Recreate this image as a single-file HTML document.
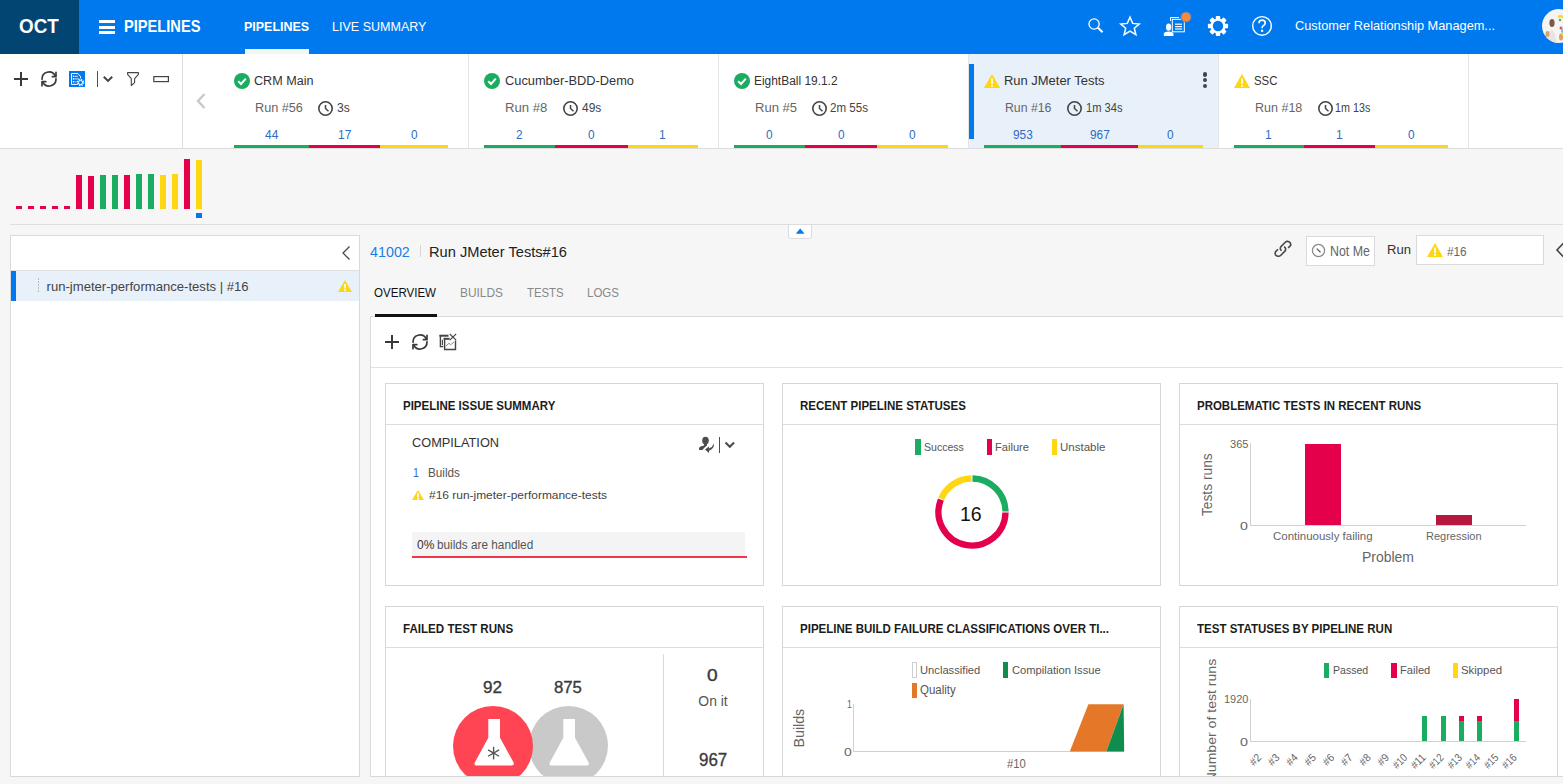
<!DOCTYPE html>
<html><head><meta charset="utf-8"><style>
html,body{margin:0;padding:0;}
body{width:1563px;height:784px;overflow:hidden;position:relative;background:#f6f6f6;font-family:"Liberation Sans",sans-serif;}
.t{position:absolute;white-space:nowrap;}
svg{overflow:visible;}
</style></head><body>
<div style="position:absolute;left:0px;top:0px;width:1563px;height:54px;background:#0079ef"></div>
<div style="position:absolute;left:0px;top:0px;width:79px;height:54px;background:#024573"></div>
<div class="t" style="left:19.25px;top:14.80px;font-size:19.86px;line-height:22px;color:#fff;font-weight:bold;transform:scaleX(0.9484);transform-origin:0 0;">OCT</div>
<div style="position:absolute;left:99px;top:20px;width:16px;height:2.5px;background:#fff"></div>
<div style="position:absolute;left:99px;top:26px;width:16px;height:2.5px;background:#fff"></div>
<div style="position:absolute;left:99px;top:31px;width:16px;height:2.5px;background:#fff"></div>
<div class="t" style="left:124.05px;top:17.04px;font-size:16.20px;line-height:18px;color:#fff;font-weight:bold;transform:scaleX(0.9044);transform-origin:0 0;">PIPELINES</div>
<div class="t" style="left:244.19px;top:18.87px;font-size:12.96px;line-height:15px;color:#fff;font-weight:bold;transform:scaleX(0.9617);transform-origin:0 0;">PIPELINES</div>
<div style="position:absolute;left:245px;top:49px;width:64px;height:5px;background:#f5f5f5"></div>
<div class="t" style="left:332.40px;top:18.87px;font-size:12.96px;line-height:15px;color:#fff;transform:scaleX(0.9674);transform-origin:0 0;">LIVE SUMMARY</div>
<div class="t" style="left:1295.36px;top:18.90px;font-size:12.69px;line-height:14px;color:#fff;transform:scaleX(1.0057);transform-origin:0 0;">Customer Relationship Managem...</div>
<svg style="position:absolute;left:1080px;top:10px;" width="30" height="30" viewBox="0 0 30 30"><circle cx="14.1" cy="14" r="5.1" fill="none" stroke="#fff" stroke-width="1.3"/><line x1="18" y1="17.8" x2="22.6" y2="22.2" stroke="#fff" stroke-width="2.1" stroke-linecap="butt"/></svg>
<svg style="position:absolute;left:1119px;top:16px;" width="22" height="20" viewBox="0 0 22 20"><polygon points="11,1.2 13.7,7.4 20.3,8 15.3,12.3 16.9,18.7 11,15.2 5.1,18.7 6.7,12.3 1.7,8 8.3,7.4" fill="none" stroke="#fff" stroke-width="1.5" stroke-linejoin="miter"/></svg>
<svg style="position:absolute;left:1160px;top:8px;" width="34" height="32" viewBox="0 0 34 32"><g fill="none" stroke="#fff" stroke-width="1"><path d="M10.5,13 V9.5 H19"/><rect x="12.3" y="11.3" width="12" height="12.5"/></g><g stroke="#fff" stroke-width="1.2"><line x1="15" y1="16.2" x2="22" y2="16.2"/><line x1="15" y1="18.6" x2="22" y2="18.6"/><line x1="15" y1="21" x2="22" y2="21"/></g><ellipse cx="8.6" cy="19.2" rx="2.6" ry="3.6" fill="#fff"/><path d="M3.8,28 V25.6 Q4.5,23.4 8.6,23.4 Q12.7,23.4 13.4,25.6 V28 Z" fill="#fff"/><circle cx="26" cy="9" r="5.6" fill="#4f7fe0"/><circle cx="26" cy="9" r="4.6" fill="#f28c38"/></svg>
<svg style="position:absolute;left:1206px;top:14px;" width="24" height="24" viewBox="0 0 24 24"><g transform="translate(12,12)"><rect x="-2.2" y="-10.1" width="4.4" height="4" rx="0.8" fill="#fff" transform="rotate(0)"/><rect x="-2.2" y="-10.1" width="4.4" height="4" rx="0.8" fill="#fff" transform="rotate(45)"/><rect x="-2.2" y="-10.1" width="4.4" height="4" rx="0.8" fill="#fff" transform="rotate(90)"/><rect x="-2.2" y="-10.1" width="4.4" height="4" rx="0.8" fill="#fff" transform="rotate(135)"/><rect x="-2.2" y="-10.1" width="4.4" height="4" rx="0.8" fill="#fff" transform="rotate(180)"/><rect x="-2.2" y="-10.1" width="4.4" height="4" rx="0.8" fill="#fff" transform="rotate(225)"/><rect x="-2.2" y="-10.1" width="4.4" height="4" rx="0.8" fill="#fff" transform="rotate(270)"/><rect x="-2.2" y="-10.1" width="4.4" height="4" rx="0.8" fill="#fff" transform="rotate(315)"/><circle r="7.6" fill="#fff"/><circle r="5.2" fill="#0079ef"/></g></svg>
<svg style="position:absolute;left:1250px;top:14px;" width="24" height="24" viewBox="0 0 24 24"><circle cx="12" cy="11.9" r="9.3" fill="none" stroke="#fff" stroke-width="1.4"/><path d="M9,9.3 Q9,6.2 12.1,6.2 Q15.2,6.2 15.2,9 Q15.2,10.8 13.2,11.8 Q12.1,12.4 12.1,14.2" fill="none" stroke="#fff" stroke-width="1.7"/><rect x="11" y="15.8" width="2.2" height="2" fill="#fff"/></svg>
<svg style="position:absolute;left:1542px;top:9px;" width="34" height="34" viewBox="0 0 34 34"><defs><clipPath id="av"><circle cx="17" cy="17" r="17"/></clipPath></defs><g clip-path="url(#av)"><rect width="34" height="34" fill="#f6f4f2"/><ellipse cx="10" cy="14" rx="2.6" ry="4" fill="#7a5a48"/><path d="M3,34 L5,24 Q8,20 12,22 L15,34 Z" fill="#e9e4df"/><ellipse cx="5.5" cy="25" rx="2" ry="3" fill="#d9a070"/><ellipse cx="19" cy="28" rx="2" ry="3.5" fill="#e0a060"/><path d="M16,8 Q22,5 25,14 Q23,22 20,26" fill="none" stroke="#f2d640" stroke-width="2.5"/><circle cx="21" cy="22" r="2" fill="#6ec0ea"/><circle cx="19" cy="19" r="1.5" fill="#e05070"/><circle cx="18" cy="11" r="1.3" fill="#5cb85c"/></g></svg>
<div style="position:absolute;left:0px;top:54px;width:1563px;height:94px;background:#fff"></div>
<div style="position:absolute;left:0px;top:148px;width:1563px;height:1px;background:#dcdcdc"></div>
<div style="position:absolute;left:182px;top:54px;width:1px;height:94px;background:#dcdcdc"></div>
<div style="position:absolute;left:468px;top:54px;width:1px;height:94px;background:#e4e4e4"></div>
<div style="position:absolute;left:718px;top:54px;width:1px;height:94px;background:#e4e4e4"></div>
<div style="position:absolute;left:968px;top:54px;width:1px;height:94px;background:#e4e4e4"></div>
<div style="position:absolute;left:1218px;top:54px;width:1px;height:94px;background:#e4e4e4"></div>
<div style="position:absolute;left:1468px;top:54px;width:1px;height:94px;background:#e4e4e4"></div>
<svg style="position:absolute;left:13px;top:71px;" width="16" height="16" viewBox="0 0 16 16"><line x1="1" y1="8" x2="15" y2="8" stroke="#3a3a3a" stroke-width="2"/><line x1="8" y1="1" x2="8" y2="15" stroke="#3a3a3a" stroke-width="2"/></svg>
<svg style="position:absolute;left:39px;top:69px;" width="20" height="20" viewBox="0 0 20 20"><g fill="none" stroke="#3a3a3a" stroke-width="1.7" stroke-linecap="round" stroke-linejoin="round"><path d="M3,10.2 A7,7 0 0 1 16.06,6.5"/><polyline points="17,3.3 17,7.7 13.4,7.7"/><path d="M17,9.8 A7,7 0 0 1 3.9400000000000004,13.5"/><polyline points="3,16.7 3,12.65 6.8,12.65"/></g></svg>
<svg style="position:absolute;left:69px;top:71px;" width="16" height="16" viewBox="0 0 16 16"><rect x="0" y="0" width="16" height="16" fill="#0079ef"/><g fill="none" stroke="#fff" stroke-width="1"><path d="M2.5,13.4 V2.5 H8.8 L11.5,5.4 V7.4"/><line x1="2.5" y1="13.4" x2="7.9" y2="13.4"/><line x1="5.4" y1="5.3" x2="9" y2="5.3" stroke-opacity="0.8"/><line x1="5.4" y1="7.9" x2="10" y2="7.9" stroke-opacity="0.8"/><line x1="5.4" y1="10.8" x2="7.5" y2="10.8" stroke-opacity="0.6"/></g><circle cx="4.5" cy="5.2" r="0.8" fill="#fff"/><circle cx="4.5" cy="7.9" r="0.8" fill="#fff"/><circle cx="4.5" cy="10.8" r="0.8" fill="#fff"/><circle cx="11.5" cy="11.5" r="3.8" fill="#0079ef"/><circle cx="11.5" cy="11.5" r="2.9" fill="none" stroke="#fff" stroke-width="1.8" stroke-dasharray="1.15 1.13"/><circle cx="11.5" cy="11.5" r="2.1" fill="none" stroke="#fff" stroke-width="1"/></svg>
<div style="position:absolute;left:97px;top:71px;width:1.2px;height:16px;background:#505050"></div>
<svg style="position:absolute;left:102px;top:74px;" width="12" height="9" viewBox="0 0 12 9"><polyline points="1.8,2.8 6,6.9 10.2,2.8" fill="none" stroke="#444" stroke-width="2"/></svg>
<svg style="position:absolute;left:126px;top:71px;" width="14" height="16" viewBox="0 0 14 16"><path d="M1.6,1.6 H12.4 V3.4 L8.6,7.7 V11.6 L5.3,14.5 V7.7 L1.6,3.4 Z" fill="none" stroke="#444" stroke-width="1.1" stroke-linejoin="round"/></svg>
<svg style="position:absolute;left:153px;top:75px;" width="17" height="8" viewBox="0 0 17 8"><rect x="0.8" y="1.6" width="14.6" height="5" fill="none" stroke="#444" stroke-width="1.2"/></svg>
<svg style="position:absolute;left:195px;top:92px;" width="12" height="18" viewBox="0 0 12 18"><polyline points="9.5,2 3,9 9.5,16" fill="none" stroke="#c8c8c8" stroke-width="2.4"/></svg>
<div style="position:absolute;left:969px;top:54px;width:249px;height:94px;background:#e8f0fa"></div>
<div style="position:absolute;left:969px;top:64px;width:5px;height:75px;background:#0079ef"></div>
<svg style="position:absolute;left:234px;top:73px;" width="16" height="16" viewBox="0 0 16 16"><circle cx="8" cy="8" r="8" fill="#1aac60"/><polyline points="4.2,8.3 7,11 11.8,5.6" fill="none" stroke="#fff" stroke-width="2"/></svg>
<div class="t" style="left:254.37px;top:74.00px;font-size:12.00px;line-height:14px;color:#333;transform:scaleX(1.0496);transform-origin:0 0;">CRM Main</div>
<div class="t" style="left:255.39px;top:99.67px;font-size:12.96px;line-height:15px;color:#666;transform:scaleX(0.9784);transform-origin:0 0;">Run #56</div>
<svg style="position:absolute;left:318px;top:100.5px;" width="15" height="15" viewBox="0 0 15 15"><circle cx="7.5" cy="7.5" r="6.7" fill="none" stroke="#444" stroke-width="1.6"/><polyline points="7.5,3.9000000000000004 7.5,7.5 10.5,10.200000000000001" fill="none" stroke="#444" stroke-width="1.5"/></svg>
<div class="t" style="left:337.31px;top:99.67px;font-size:12.96px;line-height:15px;color:#444;transform:scaleX(0.9371);transform-origin:0 0;">3s</div>
<div style="position:absolute;left:234px;top:145px;width:75px;height:3px;background:#1aac60"></div>
<div class="t" style="left:264.90px;top:127.00px;font-size:13.04px;line-height:15px;color:#2d6bc4;transform:scaleX(0.9200);transform-origin:0 0;">44</div>
<div style="position:absolute;left:309px;top:145px;width:71px;height:3px;background:#e5004c"></div>
<div class="t" style="left:337.69px;top:127.00px;font-size:13.04px;line-height:15px;color:#2d6bc4;transform:scaleX(0.9200);transform-origin:0 0;">17</div>
<div style="position:absolute;left:380px;top:145px;width:68px;height:3px;background:#fed612"></div>
<div class="t" style="left:410.69px;top:127.87px;font-size:12.68px;line-height:14px;color:#2d6bc4;transform:scaleX(0.9331);transform-origin:0 0;">0</div>
<svg style="position:absolute;left:484px;top:73px;" width="16" height="16" viewBox="0 0 16 16"><circle cx="8" cy="8" r="8" fill="#1aac60"/><polyline points="4.2,8.3 7,11 11.8,5.6" fill="none" stroke="#fff" stroke-width="2"/></svg>
<div class="t" style="left:504.56px;top:74.00px;font-size:12.00px;line-height:14px;color:#333;transform:scaleX(1.0687);transform-origin:0 0;">Cucumber-BDD-Demo</div>
<div class="t" style="left:505.25px;top:99.67px;font-size:12.96px;line-height:15px;color:#666;transform:scaleX(1.0141);transform-origin:0 0;">Run #8</div>
<svg style="position:absolute;left:562.6px;top:100.5px;" width="15" height="15" viewBox="0 0 15 15"><circle cx="7.5" cy="7.5" r="6.7" fill="none" stroke="#444" stroke-width="1.6"/><polyline points="7.5,3.9000000000000004 7.5,7.5 10.5,10.200000000000001" fill="none" stroke="#444" stroke-width="1.5"/></svg>
<div class="t" style="left:581.76px;top:99.67px;font-size:12.96px;line-height:15px;color:#444;transform:scaleX(0.9231);transform-origin:0 0;">49s</div>
<div style="position:absolute;left:484px;top:145px;width:71px;height:3px;background:#1aac60"></div>
<div class="t" style="left:516.22px;top:127.00px;font-size:12.86px;line-height:15px;color:#2d6bc4;transform:scaleX(0.9200);transform-origin:0 0;">2</div>
<div style="position:absolute;left:555px;top:145px;width:73px;height:3px;background:#e5004c"></div>
<div class="t" style="left:588.19px;top:127.87px;font-size:12.68px;line-height:14px;color:#2d6bc4;transform:scaleX(0.9331);transform-origin:0 0;">0</div>
<div style="position:absolute;left:628px;top:145px;width:70px;height:3px;background:#fed612"></div>
<div class="t" style="left:659.49px;top:127.00px;font-size:13.04px;line-height:15px;color:#2d6bc4;transform:scaleX(0.9200);transform-origin:0 0;">1</div>
<svg style="position:absolute;left:734px;top:73px;" width="16" height="16" viewBox="0 0 16 16"><circle cx="8" cy="8" r="8" fill="#1aac60"/><polyline points="4.2,8.3 7,11 11.8,5.6" fill="none" stroke="#fff" stroke-width="2"/></svg>
<div class="t" style="left:754.05px;top:74.00px;font-size:12.00px;line-height:14px;color:#333;transform:scaleX(0.9939);transform-origin:0 0;">EightBall 19.1.2</div>
<div class="t" style="left:754.95px;top:99.67px;font-size:13.14px;line-height:15px;color:#666;transform:scaleX(0.9949);transform-origin:0 0;">Run #5</div>
<svg style="position:absolute;left:812.4px;top:100.5px;" width="15" height="15" viewBox="0 0 15 15"><circle cx="7.5" cy="7.5" r="6.7" fill="none" stroke="#444" stroke-width="1.6"/><polyline points="7.5,3.9000000000000004 7.5,7.5 10.5,10.200000000000001" fill="none" stroke="#444" stroke-width="1.5"/></svg>
<div class="t" style="left:830.42px;top:99.67px;font-size:12.96px;line-height:15px;color:#444;transform:scaleX(0.8937);transform-origin:0 0;">2m 55s</div>
<div style="position:absolute;left:734px;top:145px;width:71px;height:3px;background:#1aac60"></div>
<div class="t" style="left:766.19px;top:127.87px;font-size:12.68px;line-height:14px;color:#2d6bc4;transform:scaleX(0.9331);transform-origin:0 0;">0</div>
<div style="position:absolute;left:805px;top:145px;width:72px;height:3px;background:#e5004c"></div>
<div class="t" style="left:837.69px;top:127.87px;font-size:12.68px;line-height:14px;color:#2d6bc4;transform:scaleX(0.9331);transform-origin:0 0;">0</div>
<div style="position:absolute;left:877px;top:145px;width:71px;height:3px;background:#fed612"></div>
<div class="t" style="left:909.19px;top:127.87px;font-size:12.68px;line-height:14px;color:#2d6bc4;transform:scaleX(0.9331);transform-origin:0 0;">0</div>
<svg style="position:absolute;left:984px;top:74px;" width="16" height="14" viewBox="0 0 16 14"><polygon points="8.0,0 16,14 0,14" fill="#fed612"/><rect x="7.1" y="4.62" width="1.8" height="5.32" fill="#fff"/><rect x="7.1" y="10.92" width="1.8" height="1.8" fill="#fff"/></svg>
<div class="t" style="left:1003.96px;top:74.00px;font-size:12.61px;line-height:14px;color:#333;transform:scaleX(1.0270);transform-origin:0 0;">Run JMeter Tests</div>
<div class="t" style="left:1005.32px;top:99.67px;font-size:12.96px;line-height:15px;color:#666;transform:scaleX(0.9468);transform-origin:0 0;">Run #16</div>
<svg style="position:absolute;left:1067.4px;top:100.5px;" width="15" height="15" viewBox="0 0 15 15"><circle cx="7.5" cy="7.5" r="6.7" fill="none" stroke="#444" stroke-width="1.6"/><polyline points="7.5,3.9000000000000004 7.5,7.5 10.5,10.200000000000001" fill="none" stroke="#444" stroke-width="1.5"/></svg>
<div class="t" style="left:1086.16px;top:99.67px;font-size:12.96px;line-height:15px;color:#444;transform:scaleX(0.8618);transform-origin:0 0;">1m 34s</div>
<div style="position:absolute;left:984px;top:145px;width:77px;height:3px;background:#1aac60"></div>
<div class="t" style="left:1012.62px;top:127.87px;font-size:12.68px;line-height:14px;color:#2d6bc4;transform:scaleX(0.9331);transform-origin:0 0;">953</div>
<div style="position:absolute;left:1061px;top:145px;width:77px;height:3px;background:#e5004c"></div>
<div class="t" style="left:1089.68px;top:127.87px;font-size:12.68px;line-height:14px;color:#2d6bc4;transform:scaleX(0.9331);transform-origin:0 0;">967</div>
<div style="position:absolute;left:1138px;top:145px;width:65px;height:3px;background:#fed612"></div>
<div class="t" style="left:1167.19px;top:127.87px;font-size:12.68px;line-height:14px;color:#2d6bc4;transform:scaleX(0.9331);transform-origin:0 0;">0</div>
<svg style="position:absolute;left:1234px;top:74px;" width="16" height="14" viewBox="0 0 16 14"><polygon points="8.0,0 16,14 0,14" fill="#fed612"/><rect x="7.1" y="4.62" width="1.8" height="5.32" fill="#fff"/><rect x="7.1" y="10.92" width="1.8" height="1.8" fill="#fff"/></svg>
<div class="t" style="left:1254.49px;top:74.00px;font-size:12.43px;line-height:14px;color:#333;transform:scaleX(0.9166);transform-origin:0 0;">SSC</div>
<div class="t" style="left:1255.00px;top:99.67px;font-size:12.96px;line-height:15px;color:#666;transform:scaleX(0.9657);transform-origin:0 0;">Run #18</div>
<svg style="position:absolute;left:1317.5px;top:100.5px;" width="15" height="15" viewBox="0 0 15 15"><circle cx="7.5" cy="7.5" r="6.7" fill="none" stroke="#444" stroke-width="1.6"/><polyline points="7.5,3.9000000000000004 7.5,7.5 10.5,10.200000000000001" fill="none" stroke="#444" stroke-width="1.5"/></svg>
<div class="t" style="left:1335.49px;top:99.67px;font-size:12.96px;line-height:15px;color:#444;transform:scaleX(0.8302);transform-origin:0 0;">1m 13s</div>
<div style="position:absolute;left:1234px;top:145px;width:70px;height:3px;background:#1aac60"></div>
<div class="t" style="left:1265.49px;top:127.00px;font-size:13.04px;line-height:15px;color:#2d6bc4;transform:scaleX(0.9200);transform-origin:0 0;">1</div>
<div style="position:absolute;left:1304px;top:145px;width:71px;height:3px;background:#e5004c"></div>
<div class="t" style="left:1335.99px;top:127.00px;font-size:13.04px;line-height:15px;color:#2d6bc4;transform:scaleX(0.9200);transform-origin:0 0;">1</div>
<div style="position:absolute;left:1375px;top:145px;width:73px;height:3px;background:#fed612"></div>
<div class="t" style="left:1408.19px;top:127.87px;font-size:12.68px;line-height:14px;color:#2d6bc4;transform:scaleX(0.9331);transform-origin:0 0;">0</div>
<div style="position:absolute;left:1203px;top:72.4px;width:4.2px;height:4.2px;border-radius:50%;background:#444"></div>
<div style="position:absolute;left:1203px;top:78.10000000000001px;width:4.2px;height:4.2px;border-radius:50%;background:#444"></div>
<div style="position:absolute;left:1203px;top:83.80000000000001px;width:4.2px;height:4.2px;border-radius:50%;background:#444"></div>
<div style="position:absolute;left:16px;top:206px;width:6px;height:3px;background:#e5004c"></div>
<div style="position:absolute;left:28px;top:206px;width:6px;height:3px;background:#e5004c"></div>
<div style="position:absolute;left:40px;top:206px;width:6px;height:3px;background:#e5004c"></div>
<div style="position:absolute;left:52px;top:206px;width:6px;height:3px;background:#e5004c"></div>
<div style="position:absolute;left:64px;top:206px;width:6px;height:3px;background:#e5004c"></div>
<div style="position:absolute;left:76px;top:175px;width:6px;height:34px;background:#e5004c"></div>
<div style="position:absolute;left:88px;top:176px;width:6px;height:33px;background:#e5004c"></div>
<div style="position:absolute;left:100px;top:175px;width:6px;height:34px;background:#1aac60"></div>
<div style="position:absolute;left:112px;top:175px;width:6px;height:34px;background:#1aac60"></div>
<div style="position:absolute;left:124px;top:175px;width:6px;height:34px;background:#e5004c"></div>
<div style="position:absolute;left:136px;top:174px;width:6px;height:35px;background:#1aac60"></div>
<div style="position:absolute;left:148px;top:174px;width:6px;height:35px;background:#1aac60"></div>
<div style="position:absolute;left:160px;top:175px;width:6px;height:34px;background:#fed612"></div>
<div style="position:absolute;left:172px;top:174px;width:6px;height:35px;background:#fed612"></div>
<div style="position:absolute;left:184px;top:159px;width:6px;height:50px;background:#e5004c"></div>
<div style="position:absolute;left:196px;top:160px;width:6px;height:49px;background:#fed612"></div>
<div style="position:absolute;left:196px;top:213px;width:6px;height:5px;background:#0079ef"></div>
<div style="position:absolute;left:10px;top:224px;width:1553px;height:1px;background:#dedede"></div>
<div style="position:absolute;left:788px;top:224px;width:24px;height:15px;background:#fff;border:1px solid #dcdcdc;border-radius:0 0 3px 3px;box-sizing:border-box"></div>
<svg style="position:absolute;left:795px;top:228px;" width="11" height="7" viewBox="0 0 11 7"><polygon points="5.2,0.6 9.6,5.8 0.8,5.8" fill="#0079ef"/></svg>
<div style="position:absolute;left:10px;top:235px;width:350px;height:542px;background:#fff;border:1px solid #dadada;box-sizing:border-box"></div>
<div style="position:absolute;left:11px;top:270px;width:348px;height:1px;background:#e0e0e0"></div>
<svg style="position:absolute;left:340px;top:245px;" width="12" height="16" viewBox="0 0 12 16"><polyline points="9.5,1.5 3,8 9.5,14.5" fill="none" stroke="#444" stroke-width="1.25"/></svg>
<div style="position:absolute;left:11px;top:271px;width:348px;height:30px;background:#e8f0fa"></div>
<div style="position:absolute;left:11px;top:271px;width:5px;height:30px;background:#0079ef"></div>
<div style="position:absolute;left:38px;top:278px;width:1px;height:15px;background:repeating-linear-gradient(#bbb 0 2px,transparent 2px 3px)"></div>
<div class="t" style="left:46.54px;top:278.80px;font-size:13.10px;line-height:15px;color:#444;">run-jmeter-performance-tests | #16</div>
<svg style="position:absolute;left:338px;top:280px;" width="14" height="12" viewBox="0 0 14 12"><polygon points="7.0,0 14,12 0,12" fill="#fed612"/><rect x="6.1" y="3.96" width="1.8" height="4.5600000000000005" fill="#fff"/><rect x="6.1" y="9.36" width="1.8" height="1.8" fill="#fff"/></svg>
<div class="t" style="left:370.41px;top:243.56px;font-size:14.08px;line-height:16px;color:#1a7ee8;transform:scaleX(1.0165);transform-origin:0 0;">41002</div>
<div style="position:absolute;left:419.5px;top:245px;width:1.5px;height:12px;background:#d6d6d6"></div>
<div class="t" style="left:429.03px;top:243.56px;font-size:14.08px;line-height:16px;color:#222;transform:scaleX(1.0395);transform-origin:0 0;">Run JMeter Tests#16</div>
<svg style="position:absolute;left:1272px;top:238px;" width="22" height="22" viewBox="0 0 22 22"><svg width="22" height="22" viewBox="0 0 784 784"><g fill="none" stroke="#4a4a4a" stroke-width="58" stroke-linecap="butt" stroke-linejoin="round"><path d="M575,355 L640,290 Q690,235 650,170 Q600,110 530,120 Q495,127 465,160 L320,305 Q280,350 300,405 Q315,435 345,450"/><path d="M215,400 L140,475 Q90,535 130,605 Q175,660 250,650 Q290,643 315,615 L460,470 Q500,425 480,370 Q465,330 430,315"/></g></svg></svg>
<div style="position:absolute;left:1306px;top:236px;width:69px;height:30px;background:#fff;border:1px solid #dadada;box-sizing:border-box"></div>
<svg style="position:absolute;left:1311.4px;top:243.4px;" width="15" height="15" viewBox="0 0 15 15"><circle cx="7.5" cy="7.5" r="6.1" fill="none" stroke="#8a8a8a" stroke-width="1.3"/><line x1="5.7" y1="5.6" x2="9.5" y2="9.3" stroke="#555" stroke-width="1.2"/></svg>
<div class="t" style="left:1329.51px;top:243.36px;font-size:14.00px;line-height:16px;color:#666;transform:scaleX(0.8839);transform-origin:0 0;">Not Me</div>
<div class="t" style="left:1386.55px;top:242.27px;font-size:13.43px;line-height:15px;color:#333;transform:scaleX(0.9738);transform-origin:0 0;">Run</div>
<div style="position:absolute;left:1416px;top:235px;width:128px;height:30px;background:#fff;border:1px solid #dadada;box-sizing:border-box"></div>
<svg style="position:absolute;left:1427px;top:243px;" width="16" height="14" viewBox="0 0 16 14"><polygon points="8.0,0 16,14 0,14" fill="#fed612"/><rect x="7.1" y="4.62" width="1.8" height="5.32" fill="#fff"/><rect x="7.1" y="10.92" width="1.8" height="1.8" fill="#fff"/></svg>
<div class="t" style="left:1447.24px;top:244.37px;font-size:12.82px;line-height:15px;color:#666;transform:scaleX(0.9199);transform-origin:0 0;">#16</div>
<svg style="position:absolute;left:1555px;top:241px;" width="12" height="18" viewBox="0 0 12 18"><polyline points="9,1.5 2,9 9,16.5" fill="none" stroke="#444" stroke-width="1.6"/></svg>
<div class="t" style="left:374.48px;top:285.87px;font-size:12.68px;line-height:14px;color:#111;transform:scaleX(0.9111);transform-origin:0 0;">OVERVIEW</div>
<div class="t" style="left:460.35px;top:285.87px;font-size:12.68px;line-height:14px;color:#888;transform:scaleX(0.9394);transform-origin:0 0;">BUILDS</div>
<div class="t" style="left:527.47px;top:285.87px;font-size:12.68px;line-height:14px;color:#888;transform:scaleX(0.8977);transform-origin:0 0;">TESTS</div>
<div class="t" style="left:587.28px;top:285.87px;font-size:12.68px;line-height:14px;color:#888;transform:scaleX(0.9080);transform-origin:0 0;">LOGS</div>
<div style="position:absolute;left:370px;top:316px;width:1200px;height:461px;background:#fff;border:1px solid #dadada;box-sizing:border-box"></div>
<div style="position:absolute;left:375px;top:314px;width:62px;height:3px;background:#111"></div>
<div style="position:absolute;left:371px;top:367px;width:1192px;height:1px;background:#e0e0e0"></div>
<svg style="position:absolute;left:384px;top:334px;" width="16" height="16" viewBox="0 0 16 16"><line x1="1" y1="8" x2="15" y2="8" stroke="#3a3a3a" stroke-width="2"/><line x1="8" y1="1" x2="8" y2="15" stroke="#3a3a3a" stroke-width="2"/></svg>
<svg style="position:absolute;left:409.9px;top:332px;" width="20" height="20" viewBox="0 0 20 20"><g fill="none" stroke="#3a3a3a" stroke-width="1.7" stroke-linecap="round" stroke-linejoin="round"><path d="M3,10.2 A7,7 0 0 1 16.06,6.5"/><polyline points="17,3.3 17,7.7 13.4,7.7"/><path d="M17,9.8 A7,7 0 0 1 3.9400000000000004,13.5"/><polyline points="3,16.7 3,12.65 6.8,12.65"/></g></svg>
<svg style="position:absolute;left:438px;top:332px;" width="20" height="20" viewBox="0 0 20 20"><g fill="none" stroke="#444" stroke-linecap="square"><path d="M2.4,3.7 H9.5" stroke-width="2"/><path d="M2.4,3.7 V14.6 H4.6" stroke-width="1.4"/><line x1="4.4" y1="8.2" x2="4.4" y2="12.6" stroke-width="1.1"/><path d="M6.6,6.8 H10.6" stroke-width="2"/><path d="M6.6,6.8 V17.5 H17.5 V9.3" stroke-width="1.4"/><line x1="12.2" y1="2.4" x2="17.7" y2="7.7" stroke-width="1.2"/><line x1="17.7" y1="2.4" x2="12.2" y2="7.7" stroke-width="1.2"/><polyline points="8.2,13.9 10.9,11.3 12.6,12.8 15.7,10.2" stroke="#888" stroke-width="1"/></g></svg>
<div style="position:absolute;left:385px;top:383px;width:379px;height:203px;background:#fff;border:1px solid #d6d6d6;box-sizing:border-box"></div>
<div style="position:absolute;left:386px;top:424px;width:377px;height:1px;background:#dcdcdc"></div>
<div class="t" style="left:402.65px;top:398.17px;font-size:12.96px;line-height:15px;color:#1c1c1c;font-weight:bold;transform:scaleX(0.8879);transform-origin:0 0;">PIPELINE ISSUE SUMMARY</div>
<div style="position:absolute;left:782px;top:383px;width:379px;height:203px;background:#fff;border:1px solid #d6d6d6;box-sizing:border-box"></div>
<div style="position:absolute;left:783px;top:424px;width:377px;height:1px;background:#dcdcdc"></div>
<div class="t" style="left:799.65px;top:398.17px;font-size:12.96px;line-height:15px;color:#1c1c1c;font-weight:bold;transform:scaleX(0.8888);transform-origin:0 0;">RECENT PIPELINE STATUSES</div>
<div style="position:absolute;left:1179px;top:383px;width:379px;height:203px;background:#fff;border:1px solid #d6d6d6;box-sizing:border-box"></div>
<div style="position:absolute;left:1180px;top:424px;width:377px;height:1px;background:#dcdcdc"></div>
<div class="t" style="left:1196.65px;top:398.17px;font-size:12.96px;line-height:15px;color:#1c1c1c;font-weight:bold;transform:scaleX(0.8859);transform-origin:0 0;">PROBLEMATIC TESTS IN RECENT RUNS</div>
<div style="position:absolute;left:385px;top:606px;width:379px;height:180px;background:#fff;border:1px solid #d6d6d6;box-sizing:border-box"></div>
<div style="position:absolute;left:386px;top:647px;width:377px;height:1px;background:#dcdcdc"></div>
<div class="t" style="left:402.65px;top:621.17px;font-size:12.96px;line-height:15px;color:#1c1c1c;font-weight:bold;transform:scaleX(0.8949);transform-origin:0 0;">FAILED TEST RUNS</div>
<div style="position:absolute;left:782px;top:606px;width:379px;height:180px;background:#fff;border:1px solid #d6d6d6;box-sizing:border-box"></div>
<div style="position:absolute;left:783px;top:647px;width:377px;height:1px;background:#dcdcdc"></div>
<div class="t" style="left:799.65px;top:621.17px;font-size:12.96px;line-height:15px;color:#1c1c1c;font-weight:bold;transform:scaleX(0.8896);transform-origin:0 0;">PIPELINE BUILD FAILURE CLASSIFICATIONS OVER TI...</div>
<div style="position:absolute;left:1179px;top:606px;width:379px;height:180px;background:#fff;border:1px solid #d6d6d6;box-sizing:border-box"></div>
<div style="position:absolute;left:1180px;top:647px;width:377px;height:1px;background:#dcdcdc"></div>
<div class="t" style="left:1197.28px;top:621.17px;font-size:12.96px;line-height:15px;color:#1c1c1c;font-weight:bold;transform:scaleX(0.8893);transform-origin:0 0;">TEST STATUSES BY PIPELINE RUN</div>
<div class="t" style="left:411.56px;top:436.07px;font-size:12.54px;line-height:14px;color:#333;transform:scaleX(1.0191);transform-origin:0 0;">COMPILATION</div>
<svg style="position:absolute;left:698px;top:436px;" width="18" height="18" viewBox="0 0 18 18"><g fill="#4d4d4d"><ellipse cx="7.5" cy="4.6" rx="3.3" ry="3.9"/><path d="M6,8 L9,8 L9,9.6 L6.6,11.5 L4.4,13.9 L1,14 L1,12 Q1.6,10.4 6,9.6 Z"/><path d="M16,7.5 Q16.5,12.5 11,14.8 L11,17 L7,13.6 L11,10.5 L11,12.6 Q14.2,11.5 16,7.5 Z"/></g></svg>
<div style="position:absolute;left:719px;top:437px;width:1.3px;height:16px;background:#4d4d4d"></div>
<svg style="position:absolute;left:724px;top:441px;" width="12" height="8" viewBox="0 0 12 8"><polyline points="1.5,1.5 5.8,5.7 10.1,1.5" fill="none" stroke="#4d4d4d" stroke-width="2.1"/></svg>
<div class="t" style="left:412.51px;top:464.80px;font-size:13.48px;line-height:15px;color:#2d6bc4;transform:scaleX(0.7846);transform-origin:0 0;">1</div>
<div class="t" style="left:427.66px;top:464.67px;font-size:13.33px;line-height:15px;color:#555;transform:scaleX(0.8793);transform-origin:0 0;">Builds</div>
<svg style="position:absolute;left:412px;top:490px;" width="12" height="10" viewBox="0 0 12 10"><polygon points="6.0,0 12,10 0,10" fill="#fed612"/><rect x="5.1" y="3.3000000000000003" width="1.8" height="3.8" fill="#fff"/><rect x="5.1" y="7.800000000000001" width="1.8" height="1.8" fill="#fff"/></svg>
<div class="t" style="left:429.14px;top:488.80px;font-size:11.59px;line-height:12px;color:#444;transform:scaleX(1.0319);transform-origin:0 0;">#16 run-jmeter-performance-tests</div>
<div style="position:absolute;left:412px;top:532px;width:333px;height:24px;background:#f4f4f4"></div>
<div style="position:absolute;left:412px;top:556px;width:335px;height:2px;background:#f0364a"></div>
<div class="t" style="left:416.52px;top:536.97px;font-size:13.10px;line-height:15px;color:#333;transform:scaleX(0.9139);transform-origin:0 0;">0%</div>
<div class="t" style="left:436.93px;top:537.97px;font-size:12.65px;line-height:14px;color:#555;transform:scaleX(0.9309);transform-origin:0 0;">builds are handled</div>
<div style="position:absolute;left:915px;top:439px;width:6px;height:15.5px;background:#1aac60"></div>
<div class="t" style="left:923.53px;top:441.09px;font-size:11.13px;line-height:12px;color:#555;transform:scaleX(0.9473);transform-origin:0 0;">Success</div>
<div style="position:absolute;left:987px;top:439px;width:5px;height:15.5px;background:#e5004c"></div>
<div class="t" style="left:995.01px;top:441.09px;font-size:10.75px;line-height:12px;color:#555;transform:scaleX(1.0352);transform-origin:0 0;">Failure</div>
<div style="position:absolute;left:1052px;top:439px;width:5px;height:15.5px;background:#fed612"></div>
<div class="t" style="left:1060.14px;top:441.09px;font-size:10.75px;line-height:12px;color:#555;transform:scaleX(1.0702);transform-origin:0 0;">Unstable</div>
<svg style="position:absolute;left:931.5px;top:472.4px;" width="80" height="80" viewBox="0 0 80 80"><path d="M40.47,6.50 A33.5,33.5 0 0 1 73.50,39.53" fill="none" stroke="#1aac60" stroke-width="6.3"/><path d="M73.50,40.47 A33.5,33.5 0 1 1 8.87,27.61" fill="none" stroke="#e5004c" stroke-width="6.3"/><path d="M9.23,26.75 A33.5,33.5 0 0 1 39.53,6.50" fill="none" stroke="#fed612" stroke-width="6.3"/></svg>
<div class="t" style="left:960.44px;top:502.70px;font-size:20.14px;line-height:22px;color:#111;transform:scaleX(0.9681);transform-origin:0 0;">16</div>
<div class="t" style="left:1229.86px;top:437.28px;font-size:11.69px;line-height:13px;color:#666;transform:scaleX(0.9445);transform-origin:0 0;">365</div>
<div class="t" style="left:1240.43px;top:519.99px;font-size:10.99px;line-height:12px;color:#666;transform:scaleX(1.2895);transform-origin:0 0;">0</div>
<div style="position:absolute;left:1250px;top:443px;width:1px;height:83px;background:#d0d0d0"></div>
<div style="position:absolute;left:1250px;top:525px;width:276px;height:1.2px;background:#d0d0d0"></div>
<div style="position:absolute;left:1305.3px;top:443.9px;width:35.4px;height:81.5px;background:#e5004c"></div>
<div style="position:absolute;left:1436.3px;top:515.1px;width:35.4px;height:10.3px;background:#b5173f"></div>
<div class="t" style="left:1273.33px;top:530.10px;font-size:10.90px;line-height:12px;color:#666;transform:scaleX(1.0545);transform-origin:0 0;">Continuously failing</div>
<div class="t" style="left:1426.02px;top:530.10px;font-size:10.90px;line-height:12px;color:#666;transform:scaleX(1.0093);transform-origin:0 0;">Regression</div>
<div class="t" style="left:1362.18px;top:550.40px;font-size:13.79px;line-height:15px;color:#666;transform:scaleX(1.0126);transform-origin:0 0;">Problem</div>
<div class="t" style="left:1171.85px;top:475.70px;font-size:15.29px;line-height:17px;color:#666;transform-origin:34.70px 8.80px;transform:rotate(-90deg) scaleX(0.9013)">Tests runs</div>
<div class="t" style="left:483.23px;top:677.83px;font-size:16.76px;line-height:19px;color:#3a3a3a;transform:scaleX(1.0228);transform-origin:0 0;-webkit-text-stroke:0.35px #3a3a3a;">92</div>
<div class="t" style="left:553.94px;top:677.83px;font-size:16.76px;line-height:19px;color:#3a3a3a;-webkit-text-stroke:0.35px #3a3a3a;">875</div>
<div style="position:absolute;left:529px;top:705.7px;width:79px;height:79px;border-radius:50%;background:#c9c9c9"></div>
<div style="position:absolute;left:453px;top:705.7px;width:80.3px;height:80.3px;border-radius:50%;background:#ff4553"></div>
<svg style="position:absolute;left:473.8px;top:719.2px;" width="42" height="48" viewBox="0 0 42 48"><path d="M14.3,0 H26 V18.8 L39.6,43.5 Q40.6,46.5 37.8,46.5 H2.6 Q-0.4,46.5 0.8,43.5 L14.3,18.8 Z" fill="#fff"/></svg>
<svg style="position:absolute;left:548.5px;top:719.2px;" width="42" height="48" viewBox="0 0 42 48"><path d="M14.3,0 H26 V18.8 L39.6,43.5 Q40.6,46.5 37.8,46.5 H2.6 Q-0.4,46.5 0.8,43.5 L14.3,18.8 Z" fill="#fff"/></svg>
<svg style="position:absolute;left:486px;top:746px;" width="15" height="15" viewBox="0 0 15 15"><g stroke="#555" stroke-width="1.4"><line x1="7.6" y1="0.8" x2="7.6" y2="13.4"/><line x1="2.1" y1="3.95" x2="13.1" y2="10.25"/><line x1="2.1" y1="10.25" x2="13.1" y2="3.95"/></g></svg>
<div style="position:absolute;left:663px;top:654px;width:1px;height:122px;background:#dadada"></div>
<div class="t" style="left:707.43px;top:666.54px;font-size:15.77px;line-height:17px;color:#3a3a3a;transform:scaleX(1.2150);transform-origin:0 0;-webkit-text-stroke:0.35px #3a3a3a;">0</div>
<div class="t" style="left:698.37px;top:693.16px;font-size:13.88px;line-height:16px;color:#555;">On it</div>
<div class="t" style="left:698.84px;top:748.51px;font-size:18.73px;line-height:21px;color:#3a3a3a;transform:scaleX(0.9045);transform-origin:0 0;-webkit-text-stroke:0.35px #3a3a3a;">967</div>
<div style="position:absolute;left:911.5px;top:662.3px;width:5.2px;height:15.7px;border:1px solid #cfcfcf;box-sizing:border-box;background:#fff"></div>
<div class="t" style="left:919.86px;top:664.00px;font-size:11.31px;line-height:12px;color:#555;transform:scaleX(0.9902);transform-origin:0 0;">Unclassified</div>
<div style="position:absolute;left:1003.3px;top:662.3px;width:5.2px;height:15.7px;background:#118c4f"></div>
<div class="t" style="left:1011.74px;top:664.00px;font-size:11.31px;line-height:12px;color:#555;transform:scaleX(0.9878);transform-origin:0 0;">Compilation Issue</div>
<div style="position:absolute;left:911.5px;top:682.5px;width:5.2px;height:15px;background:#e57828"></div>
<div class="t" style="left:920.18px;top:683.00px;font-size:11.86px;line-height:14px;color:#555;transform:scaleX(0.9682);transform-origin:0 0;">Quality</div>
<div class="t" style="left:846.54px;top:697.80px;font-size:10.72px;line-height:12px;color:#666;transform:scaleX(0.8145);transform-origin:0 0;">1</div>
<div class="t" style="left:843.74px;top:746.29px;font-size:11.13px;line-height:12px;color:#666;transform:scaleX(1.2545);transform-origin:0 0;">0</div>
<div style="position:absolute;left:853px;top:703.7px;width:1px;height:48px;background:#d0d0d0"></div>
<div style="position:absolute;left:853px;top:751px;width:271px;height:1.2px;background:#d0d0d0"></div>
<svg style="position:absolute;left:1060px;top:700px;" width="70" height="55" viewBox="0 0 70 55"><polygon points="9.8,51.4 28.4,4.2 63.6,4.2 46.3,51.4" fill="#e57828"/><polygon points="46.3,51.4 63.6,4.2 64.2,51.4" fill="#118c4f"/></svg>
<div class="t" style="left:1006.64px;top:757.08px;font-size:11.97px;line-height:14px;color:#666;transform:scaleX(0.9407);transform-origin:0 0;">#10</div>
<div class="t" style="left:779.19px;top:720.00px;font-size:14.56px;line-height:16px;color:#666;transform-origin:20.16px 7.80px;transform:rotate(-90deg) scaleX(0.9738)">Builds</div>
<div style="position:absolute;left:1324.4px;top:662.6px;width:5px;height:15px;background:#1aac60"></div>
<div class="t" style="left:1332.75px;top:664.20px;font-size:11.45px;line-height:12px;color:#555;transform:scaleX(0.9228);transform-origin:0 0;">Passed</div>
<div style="position:absolute;left:1391.4px;top:662.6px;width:5.3px;height:15px;background:#e5004c"></div>
<div class="t" style="left:1399.71px;top:664.20px;font-size:11.45px;line-height:12px;color:#555;transform:scaleX(0.9717);transform-origin:0 0;">Failed</div>
<div style="position:absolute;left:1453.2px;top:662.6px;width:5px;height:15px;background:#fed612"></div>
<div class="t" style="left:1460.99px;top:664.20px;font-size:11.45px;line-height:12px;color:#555;transform:scaleX(0.9919);transform-origin:0 0;">Skipped</div>
<div class="t" style="left:1223.58px;top:693.19px;font-size:11.41px;line-height:12px;color:#666;transform:scaleX(0.9615);transform-origin:0 0;">1920</div>
<div class="t" style="left:1240.12px;top:737.10px;font-size:10.42px;line-height:11px;color:#666;transform:scaleX(1.3792);transform-origin:0 0;">0</div>
<div style="position:absolute;left:1250px;top:699px;width:1px;height:42.5px;background:#d0d0d0"></div>
<div style="position:absolute;left:1250px;top:741px;width:276px;height:1.2px;background:#d0d0d0"></div>
<div style="position:absolute;left:1422.3px;top:716.3px;width:5px;height:25.100000000000023px;background:#1aac60"></div>
<div style="position:absolute;left:1440.5px;top:716.3px;width:5px;height:25.100000000000023px;background:#1aac60"></div>
<div style="position:absolute;left:1458.8px;top:716.3px;width:5px;height:4.400000000000091px;background:#e5004c"></div>
<div style="position:absolute;left:1458.8px;top:720.7px;width:5px;height:20.699999999999932px;background:#1aac60"></div>
<div style="position:absolute;left:1477.0px;top:716.3px;width:5px;height:4.400000000000091px;background:#e5004c"></div>
<div style="position:absolute;left:1477.0px;top:720.7px;width:5px;height:20.699999999999932px;background:#1aac60"></div>
<div style="position:absolute;left:1513.5px;top:698.9px;width:5px;height:21.800000000000068px;background:#e5004c"></div>
<div style="position:absolute;left:1513.5px;top:720.7px;width:5px;height:20.699999999999932px;background:#1aac60"></div>
<svg style="position:absolute;left:0;top:0" width="1563" height="784"><text x="1262.1" y="758.3" transform="rotate(-45 1262.1 758.3)" text-anchor="end" font-family="Liberation Sans" font-size="11" fill="#666" textLength="11.5" lengthAdjust="spacingAndGlyphs">#2</text><text x="1280.4" y="758.3" transform="rotate(-45 1280.4 758.3)" text-anchor="end" font-family="Liberation Sans" font-size="11" fill="#666" textLength="11.5" lengthAdjust="spacingAndGlyphs">#3</text><text x="1298.6" y="758.3" transform="rotate(-45 1298.6 758.3)" text-anchor="end" font-family="Liberation Sans" font-size="11" fill="#666" textLength="11.5" lengthAdjust="spacingAndGlyphs">#4</text><text x="1316.9" y="758.3" transform="rotate(-45 1316.9 758.3)" text-anchor="end" font-family="Liberation Sans" font-size="11" fill="#666" textLength="11.5" lengthAdjust="spacingAndGlyphs">#5</text><text x="1335.1" y="758.3" transform="rotate(-45 1335.1 758.3)" text-anchor="end" font-family="Liberation Sans" font-size="11" fill="#666" textLength="11.5" lengthAdjust="spacingAndGlyphs">#6</text><text x="1353.3" y="758.3" transform="rotate(-45 1353.3 758.3)" text-anchor="end" font-family="Liberation Sans" font-size="11" fill="#666" textLength="11.5" lengthAdjust="spacingAndGlyphs">#7</text><text x="1371.6" y="758.3" transform="rotate(-45 1371.6 758.3)" text-anchor="end" font-family="Liberation Sans" font-size="11" fill="#666" textLength="11.5" lengthAdjust="spacingAndGlyphs">#8</text><text x="1389.8" y="758.3" transform="rotate(-45 1389.8 758.3)" text-anchor="end" font-family="Liberation Sans" font-size="11" fill="#666" textLength="11.5" lengthAdjust="spacingAndGlyphs">#9</text><text x="1408.1" y="758.3" transform="rotate(-45 1408.1 758.3)" text-anchor="end" font-family="Liberation Sans" font-size="11" fill="#666" textLength="15.8" lengthAdjust="spacingAndGlyphs">#10</text><text x="1426.3" y="758.3" transform="rotate(-45 1426.3 758.3)" text-anchor="end" font-family="Liberation Sans" font-size="11" fill="#666" textLength="15.8" lengthAdjust="spacingAndGlyphs">#11</text><text x="1444.5" y="758.3" transform="rotate(-45 1444.5 758.3)" text-anchor="end" font-family="Liberation Sans" font-size="11" fill="#666" textLength="15.8" lengthAdjust="spacingAndGlyphs">#12</text><text x="1462.8" y="758.3" transform="rotate(-45 1462.8 758.3)" text-anchor="end" font-family="Liberation Sans" font-size="11" fill="#666" textLength="15.8" lengthAdjust="spacingAndGlyphs">#13</text><text x="1481.0" y="758.3" transform="rotate(-45 1481.0 758.3)" text-anchor="end" font-family="Liberation Sans" font-size="11" fill="#666" textLength="15.8" lengthAdjust="spacingAndGlyphs">#14</text><text x="1499.3" y="758.3" transform="rotate(-45 1499.3 758.3)" text-anchor="end" font-family="Liberation Sans" font-size="11" fill="#666" textLength="15.8" lengthAdjust="spacingAndGlyphs">#15</text><text x="1517.5" y="758.3" transform="rotate(-45 1517.5 758.3)" text-anchor="end" font-family="Liberation Sans" font-size="11" fill="#666" textLength="15.8" lengthAdjust="spacingAndGlyphs">#16</text></svg>
<div class="t" style="left:1152.27px;top:713.47px;font-size:13.33px;line-height:15px;color:#666;transform-origin:58.83px 7.23px;transform:rotate(-90deg) scaleX(1.0560)">Number of test runs</div>
<div style="position:absolute;left:0px;top:776px;width:1563px;height:8px;background:#f6f6f6"></div>
<div style="position:absolute;left:10px;top:776px;width:350px;height:1px;background:#d8d8d8"></div>
<div style="position:absolute;left:370px;top:776px;width:1193px;height:1px;background:#d8d8d8"></div>
</body></html>
